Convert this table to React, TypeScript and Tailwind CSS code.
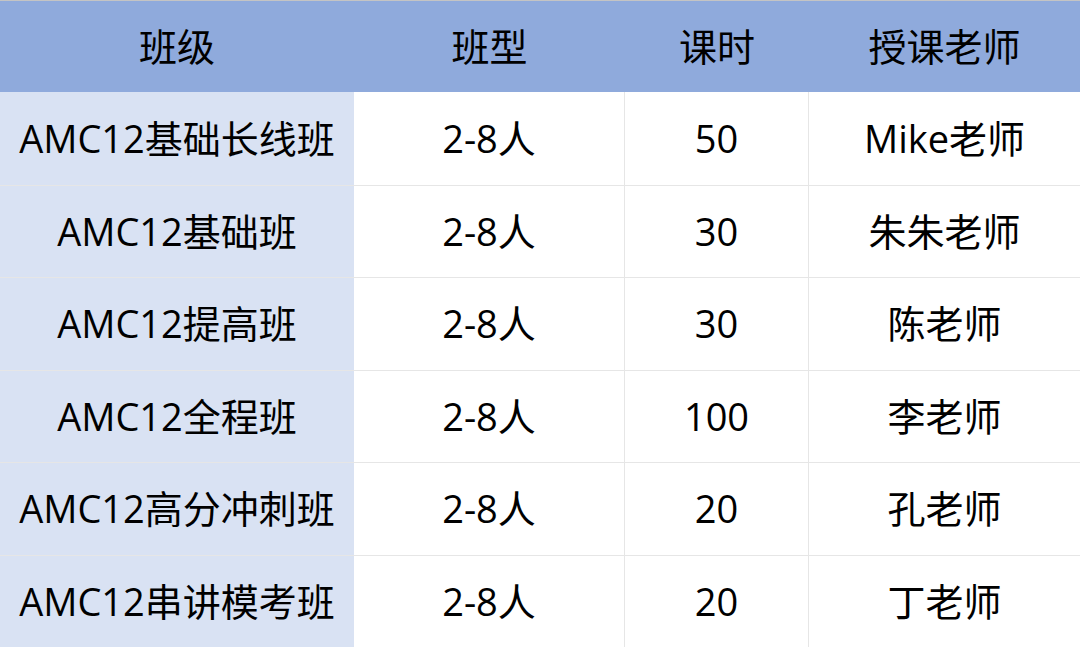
const rows = [
  { name: "AMC12基础长线班", size: "2-8人", hours: "50", teacher: "Mike老师" },
  { name: "AMC12基础班", size: "2-8人", hours: "30", teacher: "朱朱老师" },
  { name: "AMC12提高班", size: "2-8人", hours: "30", teacher: "陈老师" },
  { name: "AMC12全程班", size: "2-8人", hours: "100", teacher: "李老师" },
  { name: "AMC12高分冲刺班", size: "2-8人", hours: "20", teacher: "孔老师" },
  { name: "AMC12串讲模考班", size: "2-8人", hours: "20", teacher: "丁老师" },
];

const headers = ["班级", "班型", "课时", "授课老师"];

export default function App() {
  return (
    <main
      className="w-[1080px] h-[647px] overflow-hidden bg-white text-black text-[38px] border-t border-[#c4c4c4]"
      style={{ fontFamily: '"Open Sans", "Noto Sans CJK SC", sans-serif' }}
    >
      <div className="grid grid-cols-[354px_271px_184px_1fr] h-[91px] bg-[#8faadc]">
        {headers.map((h) => (
          <div key={h} className="flex items-center justify-center">
            {h}
          </div>
        ))}
      </div>

      {rows.map((r, i) => (
        <div
          key={r.name}
          className={
            "grid grid-cols-[354px_271px_184px_1fr] h-[92.5px] " +
            (i > 0 ? "border-t border-[#e6e6e6]" : "")
          }
        >
          <div className="flex items-center justify-center bg-[#d9e2f3] whitespace-nowrap">
            {r.name}
          </div>
          <div className="flex items-center justify-center border-r border-[#e6e6e6]">
            {r.size}
          </div>
          <div className="flex items-center justify-center border-r border-[#e6e6e6]">
            {r.hours}
          </div>
          <div className="flex items-center justify-center">{r.teacher}</div>
        </div>
      ))}
    </main>
  );
}
